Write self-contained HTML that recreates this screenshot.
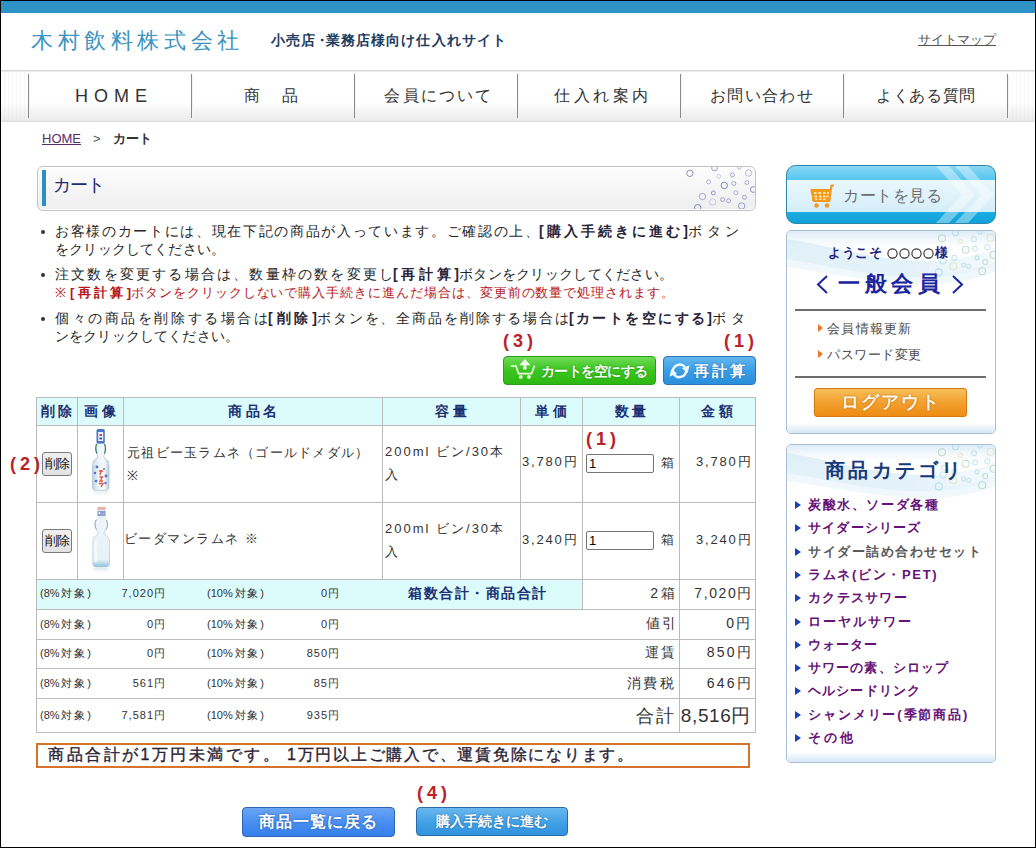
<!DOCTYPE html>
<html><head><meta charset="utf-8">
<style>
*{margin:0;padding:0;box-sizing:border-box;}
html,body{width:1036px;height:848px;overflow:hidden;background:#fff;}
body{font-family:"Liberation Sans",sans-serif;color:#333;position:relative;}
.abs{position:absolute;}
#frame{position:absolute;left:0;top:0;width:1036px;height:848px;border:1px solid #000;pointer-events:none;z-index:50;}
#topbar{left:1px;top:1px;width:1034px;height:12px;background:#2d93c4;}
#logo{left:31px;top:28px;font-size:22px;letter-spacing:4.6px;color:#3b93be;white-space:nowrap;line-height:26px;}
#sub{left:271px;top:31px;font-size:14px;font-weight:bold;color:#1d3d5e;letter-spacing:1.05px;white-space:nowrap;line-height:18px;}
#sitemap{left:918px;top:32px;font-size:13px;color:#555;text-decoration:underline;white-space:nowrap;line-height:16px;}
#nav{left:1px;top:70px;width:1034px;height:52px;border-top:1px solid #d9d9d9;border-bottom:1px solid #dedede;
 background:linear-gradient(#fff 0%,#fff 62%,#ebebeb 100%);box-shadow:inset 0 1px 0 #ececec,inset 0 -1px 0 #e8e8e8;}
.nv{position:absolute;top:0;height:50px;line-height:50px;text-align:center;font-size:16px;color:#333;white-space:nowrap;}
.dv{position:absolute;top:3px;width:1px;height:44px;background:#8a8a8a;box-shadow:1px 0 0 #f4f4f4;}
#crumb{left:42px;top:131px;font-size:13px;line-height:16px;white-space:nowrap;}
#crumb a{color:#5c2a66;text-decoration:underline;}
#h1box{left:37px;top:166px;width:719px;height:45px;border:1px solid #c2c2c2;border-radius:6px;box-shadow:inset 0 1px 0 #fff,inset 0 -1px 0 #fff;
 background:linear-gradient(#fdfdfd,#eeeeee);}
#h1bar{left:42px;top:170px;width:4px;height:36px;background:#2b8fbf;}
#h1t{left:53px;top:174px;font-size:18px;letter-spacing:-1px;color:#1c2a6e;line-height:22px;}
.bul{position:absolute;left:40px;font-size:13px;letter-spacing:0;line-height:18px;color:#262626;white-space:nowrap;}
.bul b{color:#2a2438;}
.j{display:inline-block;text-align:justify;text-align-last:justify;white-space:nowrap;vertical-align:top;}
.dot{position:absolute;width:4px;height:4px;border-radius:50%;background:#333;}
.red{color:#b8161c;}
.red b{color:#b8161c !important;}
.lbl{position:absolute;color:#bd2029;font-weight:bold;font-size:18px;line-height:20px;white-space:nowrap;letter-spacing:4px;}

.btn-g{border:1px solid #2f9a1e;border-radius:4px;background:linear-gradient(#6fdc55 0%,#3cc520 50%,#2cb812 100%);}
.btn-b{border:1px solid #2f73b4;border-radius:4px;background:linear-gradient(#63b8f0 0%,#3a9ee6 50%,#2a8fdc 100%);}

.tt{position:absolute;white-space:nowrap;font-size:13px;line-height:16px;color:#333;}
.th{position:absolute;text-align:center;font-size:14px;font-weight:bold;color:#1b3174;line-height:18px;white-space:nowrap;letter-spacing:3.5px;text-indent:3.5px;}

.j2{text-align:justify;text-align-last:justify;}
.sm{font-size:11px;letter-spacing:1px;}
.inp{border:1px solid #767676;border-radius:2px;background:#fff;font-size:13px;line-height:17px;color:#000;padding-left:2px;}

.num{font-size:13px;letter-spacing:1.8px;}
.cap{font-size:13px;letter-spacing:2px;}

.delb{border:1px solid #7a7a7a;border-radius:3px;background:linear-gradient(#f0f0f0,#e2e2e2);font-size:13px;line-height:22px;text-align:center;color:#111;letter-spacing:-0.5px;}
.bbtn1{border:1px solid #2d62b8;border-radius:4px;background:linear-gradient(#6aa6f4 0%,#4a8ef0 50%,#3480ec 100%);color:#fff;font-size:16px;font-weight:bold;text-align:center;line-height:28px;letter-spacing:1px;text-shadow:0 0 2px #1d4f9c;}
.bbtn2{border:1px solid #2a6aa6;border-radius:4px;background:linear-gradient(#6ab8ef 0%,#44a2e6 50%,#3093df 100%);color:#fff;font-size:14px;font-weight:bold;text-align:center;line-height:27px;letter-spacing:0;text-shadow:0 0 2px #1d5a8c;}

.sbox{border:1px solid #a9bdd6;border-radius:5px;background:#fff;overflow:hidden;}
.sband{position:absolute;left:0;bottom:0;width:100%;height:10px;background:linear-gradient(#ffffff,#d6e8f6);}
.wave{position:absolute;left:0;top:0;width:100%;height:70px;background:linear-gradient(170deg,#e6f1fb 0%,#f4f9fd 30%,#dfeef9 45%,#ffffff 70%);}
.tri{width:0;height:0;border-left:5px solid #e8782a;border-top:4px solid transparent;border-bottom:4px solid transparent;}
.btri{width:0;height:0;border-left:6px solid #1a3fb0;border-top:4px solid transparent;border-bottom:4px solid transparent;}
.logout{border:1px solid #d2780e;border-radius:3px;background:linear-gradient(#f8c05a 0%,#f2a030 50%,#ee8c14 100%);color:#fff8e6;font-size:18px;font-weight:bold;text-align:center;line-height:27px;letter-spacing:2px;text-shadow:0 0 2px #a85a00;}
</style></head><body>
<div id="frame"></div>
<div class="abs" id="topbar"></div>
<div class="abs" id="logo">木村飲料株式会社</div>
<div class="abs" id="sub">小売店<span style="letter-spacing:-3px;margin-left:-1px">・</span>業務店様向け仕入れサイト</div>
<div class="abs" id="sitemap">サイトマップ</div>

<div class="abs" id="nav">
 <div style="position:absolute;left:0;top:0;width:27px;height:50px;background:repeating-linear-gradient(90deg,rgba(0,0,0,0) 0px,rgba(0,0,0,0) 3px,rgba(0,0,0,0.025) 3px,rgba(0,0,0,0.025) 4px)"></div>
 <div style="position:absolute;left:1008px;top:0;width:26px;height:50px;background:repeating-linear-gradient(90deg,rgba(0,0,0,0) 0px,rgba(0,0,0,0) 3px,rgba(0,0,0,0.025) 3px,rgba(0,0,0,0.025) 4px)"></div>
 <div class="dv" style="left:27px"></div>
 <div class="nv" style="left:29px;width:162px;letter-spacing:6px;padding-left:6px;font-size:18px;">HOME</div>
 <div class="dv" style="left:190px"></div>
 <div class="nv" style="left:190px;width:162px;letter-spacing:3px">商　品</div>
 <div class="dv" style="left:353px"></div>
 <div class="nv" style="left:357px;width:162px;letter-spacing:2.2px">会員について</div>
 <div class="dv" style="left:516px"></div>
 <div class="nv" style="left:521px;width:162px;letter-spacing:3.5px">仕入れ案内</div>
 <div class="dv" style="left:679px"></div>
 <div class="nv" style="left:680px;width:162px;letter-spacing:1.4px">お問い合わせ</div>
 <div class="dv" style="left:842px"></div>
 <div class="nv" style="left:844px;width:162px;letter-spacing:0.6px">よくある質問</div>
 <div class="dv" style="left:1006px"></div>
</div>

<div class="abs" id="crumb"><a>HOME</a><span style="margin-left:12px;color:#555">&gt;</span><b style="margin-left:12px;color:#333">カート</b></div>

<div class="abs" id="h1box"></div>
<svg class="abs" style="left:660px;top:166px" width="96" height="44"><defs><clipPath id="hc"><rect x="0" y="1" width="95" height="42"/></clipPath></defs><g clip-path="url(#hc)" fill="none" stroke="#7474b8" stroke-width="1"><circle cx="29.9" cy="7.3" r="3.2" stroke-opacity="0.8"/><circle cx="54.5" cy="2.0" r="2.9" stroke-opacity="0.7"/><circle cx="79.4" cy="1.5" r="1.7" stroke-opacity="0.5"/><circle cx="88.6" cy="7.0" r="3.2" stroke-opacity="0.45"/><circle cx="58.7" cy="10.4" r="2" stroke-opacity="0.3"/><circle cx="72.4" cy="9.0" r="2" stroke-opacity="0.6"/><circle cx="48.7" cy="15.9" r="2" stroke-opacity="0.5"/><circle cx="64.3" cy="19.4" r="3.2" stroke-opacity="0.9"/><circle cx="73.8" cy="17.4" r="2" stroke-opacity="0.6"/><circle cx="86.9" cy="16.5" r="2" stroke-opacity="0.6"/><circle cx="93.3" cy="23.5" r="2.9" stroke-opacity="0.8"/><circle cx="42.5" cy="30.5" r="3.2" stroke-opacity="0.6"/><circle cx="53.3" cy="27.0" r="2" stroke-opacity="0.7"/><circle cx="75.9" cy="26.7" r="2" stroke-opacity="0.5"/><circle cx="84.4" cy="31.3" r="2" stroke-opacity="0.6"/><circle cx="52.7" cy="35.9" r="3.2" stroke-opacity="0.3"/><circle cx="62.6" cy="33.6" r="2" stroke-opacity="0.6"/><circle cx="68.6" cy="34.8" r="2" stroke-opacity="0.6"/><circle cx="37.7" cy="41.7" r="3.2" stroke-opacity="0.9"/><circle cx="81.7" cy="40.0" r="3.2" stroke-opacity="0.7"/></g></svg>
<div class="abs" id="h1bar"></div>
<div class="abs" id="h1t">カート</div>


<div class="dot" style="left:41px;top:230px"></div>
<div class="dot" style="left:41px;top:273px"></div>
<div class="dot" style="left:41px;top:317px"></div>
<div class="bul" style="left:55px;top:222px;font-size:14px"><span class="j" style="width:484px">お客様のカートには、現在下記の商品が入っています。ご確認の上、</span><b class="j" style="width:149px">[購入手続きに進む]</b><span class="j" style="width:51px">ボタン</span></div>
<div class="bul" style="left:55px;top:240px;font-size:14px"><span class="j" style="width:170px">をクリックしてください。</span></div>
<div class="bul" style="left:55px;top:265px;font-size:14px"><span class="j" style="width:338px">注文数を変更する場合は、数量枠の数を変更し</span><b class="j" style="width:66px">[再計算]</b><span class="j" style="width:214px">ボタンをクリックしてください。</span></div>
<div class="bul red" style="left:55px;top:284px;font-size:13px"><span class="j" style="width:15px">※</span><b class="j" style="width:61px">[再計算]</b><span class="j" style="width:543px">ボタンをクリックしないで購入手続きに進んだ場合は、変更前の数量で処理されます。</span></div>
<div class="bul" style="left:55px;top:309px;font-size:14px"><span class="j" style="width:213px">個々の商品を削除する場合は</span><b class="j" style="width:49px">[削除]</b><span class="j" style="width:252px">ボタンを、全商品を削除する場合は</span><b class="j" style="width:143px">[カートを空にする]</b><span class="j" style="width:33px">ボタ</span></div>
<div class="bul" style="left:55px;top:327px;font-size:14px"><span class="j" style="width:184px">ンをクリックしてください。</span></div>
<div class="lbl" style="left:503px;top:331px">(3)</div>
<div class="lbl" style="left:724px;top:331px">(1)</div>
<div class="abs btn-g" style="left:503px;top:356px;width:153px;height:29px">
<svg width="27" height="24" style="position:absolute;left:6px;top:0px" viewBox="0 0 27 24">
<path d="M1.4 9 L6 9 L8.6 16.7 L21.5 16.7 L24.3 9.2" fill="none" stroke="#eaffdc" stroke-width="1.7" stroke-linejoin="round" stroke-linecap="round"/>
<circle cx="10.8" cy="19.9" r="1.9" fill="#eaffdc"/><circle cx="18.9" cy="19.9" r="1.9" fill="#eaffdc"/>
<path d="M14.9 2 L20.5 8.3 L16.5 8.3 L16.5 12.5 L13.3 12.5 L13.3 8.3 L9.3 8.3 Z" fill="#f2fff0"/>
</svg>
<div style="position:absolute;left:37px;top:4px;font-size:14px;line-height:20px;font-weight:bold;color:#fbfff4;white-space:nowrap;text-shadow:0 0 2px #1d7a10;letter-spacing:-0.75px">カートを空にする</div>
</div>
<div class="abs btn-b" style="left:663px;top:356px;width:93px;height:29px">
<svg width="22" height="20" style="position:absolute;left:5px;top:4px" viewBox="0 0 22 20">
<path d="M3.9 10.8 A6.8 6.8 0 0 1 16 6.2" fill="none" stroke="#f2fbff" stroke-width="2.4"/>
<path d="M20.6 4.2 L18.6 11.9 L13 7.3 Z" fill="#f2fbff"/>
<path d="M17.1 9.2 A6.8 6.8 0 0 1 5 13.6" fill="none" stroke="#f2fbff" stroke-width="2.4"/>
<path d="M0.6 15.6 L2.4 7.9 L8.1 12.4 Z" fill="#f2fbff"/>
</svg>
<div style="position:absolute;left:30px;top:4px;font-size:15px;line-height:20px;font-weight:bold;color:#fff;white-space:nowrap;text-shadow:0 0 2px #1a5c9a;letter-spacing:3.2px">再計算</div>
</div>
<div class="abs" style="left:36px;top:397px;width:720px;height:29px;background:#dcfbfb"></div>
<div class="abs" style="left:36px;top:579px;width:547px;height:30px;background:#dcfbfb"></div>
<div class="abs" style="left:36px;top:397px;width:720px;height:1px;background:#bbbbbb"></div>
<div class="abs" style="left:36px;top:425px;width:720px;height:1px;background:#bbbbbb"></div>
<div class="abs" style="left:36px;top:502px;width:720px;height:1px;background:#bbbbbb"></div>
<div class="abs" style="left:36px;top:579px;width:720px;height:1px;background:#bbbbbb"></div>
<div class="abs" style="left:36px;top:609px;width:720px;height:1px;background:#bbbbbb"></div>
<div class="abs" style="left:36px;top:639px;width:720px;height:1px;background:#bbbbbb"></div>
<div class="abs" style="left:36px;top:668px;width:720px;height:1px;background:#bbbbbb"></div>
<div class="abs" style="left:36px;top:698px;width:720px;height:1px;background:#bbbbbb"></div>
<div class="abs" style="left:36px;top:732px;width:720px;height:1px;background:#bbbbbb"></div>
<div class="abs" style="left:36px;top:397px;width:1px;height:182px;background:#bbbbbb"></div>
<div class="abs" style="left:77px;top:397px;width:1px;height:182px;background:#bbbbbb"></div>
<div class="abs" style="left:123px;top:397px;width:1px;height:182px;background:#bbbbbb"></div>
<div class="abs" style="left:382px;top:397px;width:1px;height:182px;background:#bbbbbb"></div>
<div class="abs" style="left:520px;top:397px;width:1px;height:182px;background:#bbbbbb"></div>
<div class="abs" style="left:582px;top:397px;width:1px;height:182px;background:#bbbbbb"></div>
<div class="abs" style="left:679px;top:397px;width:1px;height:182px;background:#bbbbbb"></div>
<div class="abs" style="left:755px;top:397px;width:1px;height:182px;background:#bbbbbb"></div>
<div class="abs" style="left:36px;top:579px;width:1px;height:30px;background:#bbbbbb"></div>
<div class="abs" style="left:582px;top:579px;width:1px;height:30px;background:#bbbbbb"></div>
<div class="abs" style="left:679px;top:579px;width:1px;height:30px;background:#bbbbbb"></div>
<div class="abs" style="left:755px;top:579px;width:1px;height:30px;background:#bbbbbb"></div>
<div class="abs" style="left:36px;top:609px;width:1px;height:124px;background:#bbbbbb"></div>
<div class="abs" style="left:679px;top:609px;width:1px;height:124px;background:#bbbbbb"></div>
<div class="abs" style="left:755px;top:609px;width:1px;height:124px;background:#bbbbbb"></div>
<div class="th" style="left:36px;top:402px;width:41px">削除</div>
<div class="th" style="left:77px;top:402px;width:46px">画像</div>
<div class="th" style="left:123px;top:402px;width:259px">商品名</div>
<div class="th" style="left:382px;top:402px;width:138px">容量</div>
<div class="th" style="left:520px;top:402px;width:62px">単価</div>
<div class="th" style="left:582px;top:402px;width:97px">数量</div>
<div class="th" style="left:679px;top:402px;width:76px">金額</div>
<div class="tt j2" style="left:127px;top:445px;font-size:13px;width:241px;">元祖ビー玉ラムネ（ゴールドメダル）</div>
<div class="tt" style="left:127px;top:468px;font-size:13px;">※</div>
<div class="tt cap" style="left:385px;top:444px;">200ml ビン/30本</div>
<div class="tt" style="left:385px;top:467px;font-size:13px;">入</div>
<div class="tt num" style="left:522px;top:454px;">3,780円</div>
<div class="tt" style="left:661px;top:455px;font-size:13px;">箱</div>
<div class="tt num" style="left:696px;top:454px;">3,780円</div>
<div class="tt j2" style="left:124px;top:531px;font-size:13px;width:134px;">ビーダマンラムネ ※</div>
<div class="tt cap" style="left:385px;top:521px;">200ml ビン/30本</div>
<div class="tt" style="left:385px;top:544px;font-size:13px;">入</div>
<div class="tt num" style="left:522px;top:532px;">3,240円</div>
<div class="tt" style="left:661px;top:532px;font-size:13px;">箱</div>
<div class="tt num" style="left:696px;top:532px;">3,240円</div>
<div class="abs inp" style="left:586px;top:454px;width:68px;height:19px"><span>1</span></div>
<div class="abs inp" style="left:586px;top:531px;width:68px;height:19px"><span>1</span></div>
<div class="tt j2" style="left:40px;top:585px;font-size:11px;width:51px;font-family:"Liberation Mono",monospace;">(8%対象)</div>
<div class="tt sm" style="left:100px;top:585px;width:66px;text-align:right">7,020円</div>
<div class="tt j2" style="left:207px;top:585px;font-size:11px;width:57px;font-family:"Liberation Mono",monospace;">(10%対象)</div>
<div class="tt sm" style="left:270px;top:585px;width:70px;text-align:right">0円</div>
<div class="tt j2" style="left:40px;top:616px;font-size:11px;width:51px;font-family:"Liberation Mono",monospace;">(8%対象)</div>
<div class="tt sm" style="left:100px;top:616px;width:66px;text-align:right">0円</div>
<div class="tt j2" style="left:207px;top:616px;font-size:11px;width:57px;font-family:"Liberation Mono",monospace;">(10%対象)</div>
<div class="tt sm" style="left:270px;top:616px;width:70px;text-align:right">0円</div>
<div class="tt j2" style="left:40px;top:645px;font-size:11px;width:51px;font-family:"Liberation Mono",monospace;">(8%対象)</div>
<div class="tt sm" style="left:100px;top:645px;width:66px;text-align:right">0円</div>
<div class="tt j2" style="left:207px;top:645px;font-size:11px;width:57px;font-family:"Liberation Mono",monospace;">(10%対象)</div>
<div class="tt sm" style="left:270px;top:645px;width:70px;text-align:right">850円</div>
<div class="tt j2" style="left:40px;top:675px;font-size:11px;width:51px;font-family:"Liberation Mono",monospace;">(8%対象)</div>
<div class="tt sm" style="left:100px;top:675px;width:66px;text-align:right">561円</div>
<div class="tt j2" style="left:207px;top:675px;font-size:11px;width:57px;font-family:"Liberation Mono",monospace;">(10%対象)</div>
<div class="tt sm" style="left:270px;top:675px;width:70px;text-align:right">85円</div>
<div class="tt j2" style="left:40px;top:707px;font-size:11px;width:51px;font-family:"Liberation Mono",monospace;">(8%対象)</div>
<div class="tt sm" style="left:100px;top:707px;width:66px;text-align:right">7,581円</div>
<div class="tt j2" style="left:207px;top:707px;font-size:11px;width:57px;font-family:"Liberation Mono",monospace;">(10%対象)</div>
<div class="tt sm" style="left:270px;top:707px;width:70px;text-align:right">935円</div>
<div class="th" style="left:408px;top:584px;width:138px;text-align:left;letter-spacing:0;text-indent:0"><span class="j" style="width:138px">箱数合計・商品合計</span></div>
<div class="tt" style="left:560px;top:585px;font-size:14px;width:118px;letter-spacing:3px;text-align:right;">2箱</div>
<div class="tt" style="left:640px;top:585px;font-size:14px;width:113px;letter-spacing:1.6px;text-align:right;">7,020円</div>
<div class="tt" style="left:560px;top:615px;font-size:14px;width:118px;letter-spacing:2.2px;text-align:right;">値引</div>
<div class="tt" style="left:640px;top:615px;font-size:14px;width:113px;letter-spacing:2.5px;text-align:right;">0円</div>
<div class="tt" style="left:560px;top:644px;font-size:14px;width:117px;letter-spacing:2.2px;text-align:right;">運賃</div>
<div class="tt" style="left:640px;top:644px;font-size:14px;width:113px;letter-spacing:2.2px;text-align:right;">850円</div>
<div class="tt" style="left:560px;top:675px;font-size:14px;width:116px;letter-spacing:2.5px;text-align:right;">消費税</div>
<div class="tt" style="left:640px;top:675px;font-size:14px;width:113px;letter-spacing:2.2px;text-align:right;">646円</div>
<div class="tt" style="left:560px;top:705px;font-size:18px;width:116px;text-align:right;line-height:22px;letter-spacing:2px">合計</div>
<div class="tt" style="left:640px;top:705px;font-size:19px;width:111px;text-align:right;line-height:22px;letter-spacing:0.6px">8,516円</div>
<div class="abs delb" style="left:42px;top:452px;width:30px;height:24px">削除</div>
<div class="abs delb" style="left:42px;top:529px;width:30px;height:24px">削除</div>
<div class="lbl" style="left:10px;top:454px">(2)</div>
<div class="lbl" style="left:586px;top:429px">(1)</div>
<div class="lbl" style="left:417px;top:783px">(4)</div>
<div class="abs" style="left:36px;top:743px;width:714px;height:25px;border:2px solid #d6732a;"></div>
<div class="tt" style="left:48px;top:745px;font-size:16px;line-height:20px;color:#2a2233;-webkit-text-stroke:0.35px #2a2233;"><span class="j" style="width:231px">商品合計が1万円未満です。</span><span class="j" style="width:346px;margin-left:8px">1万円以上ご購入で、運賃免除になります。</span></div>
<div class="abs bbtn1" style="left:242px;top:807px;width:153px;height:30px">商品一覧に戻る</div>
<div class="abs bbtn2" style="left:416px;top:807px;width:152px;height:29px">購入手続きに進む</div>
<div class="abs" id="cartbtn" style="left:786px;top:165px;width:210px;height:59px">
<svg width="210" height="59" style="position:absolute;left:0;top:0">
<defs>
<linearGradient id="cgt" x1="0" y1="0" x2="0" y2="1"><stop offset="0" stop-color="#8ddaf6"/><stop offset="1" stop-color="#55c4ef"/></linearGradient>
<linearGradient id="cgm" x1="0" y1="0" x2="0" y2="1"><stop offset="0" stop-color="#e9f7fc"/><stop offset="1" stop-color="#d5eef9"/></linearGradient>
<linearGradient id="cgb" x1="0" y1="0" x2="0" y2="1"><stop offset="0" stop-color="#1aaee2"/><stop offset="1" stop-color="#0e9fd6"/></linearGradient>
<clipPath id="cclip"><rect x="0.5" y="0.5" width="209" height="58" rx="9" ry="9"/></clipPath>
</defs>
<g clip-path="url(#cclip)">
<rect x="0" y="0" width="210" height="15" fill="url(#cgt)"/>
<rect x="0" y="15" width="210" height="32" fill="url(#cgm)"/>
<rect x="0" y="47" width="210" height="12" fill="url(#cgb)"/>
<polygon points="149,0 162,0 189,30 162,59 149,59 176,30" fill="#ffffff" opacity="0.38"/>
<polygon points="168,0 181,0 208,30 181,59 168,59 195,30" fill="#ffffff" opacity="0.38"/>
</g>
<rect x="0.5" y="0.5" width="209" height="58" rx="9" ry="9" fill="none" stroke="#2f86a8" stroke-width="1"/>
</svg>
<svg width="26" height="26" style="position:absolute;left:24px;top:19px" viewBox="0 0 26 26">
<path d="M24 1.5 L21.5 1.5 L19 17 L4 17 L1.5 6 L20.5 6" fill="none" stroke="#f39a1e" stroke-width="2.2" stroke-linejoin="round"/>
<rect x="2" y="6" width="18.5" height="11" fill="#f39a1e"/>
<g fill="#ffe9a8"><rect x="4" y="8" width="2.5" height="2"/><rect x="8.5" y="8" width="2.5" height="2"/><rect x="13" y="8" width="2.5" height="2"/><rect x="17" y="8" width="2" height="2"/>
<rect x="4.5" y="11.5" width="2.5" height="2"/><rect x="9" y="11.5" width="2.5" height="2"/><rect x="13" y="11.5" width="2.5" height="2"/><rect x="16.5" y="11.5" width="2" height="2"/>
<rect x="5" y="14.5" width="2.5" height="1.5"/><rect x="9" y="14.5" width="2.5" height="1.5"/><rect x="13" y="14.5" width="2.5" height="1.5"/></g>
<circle cx="6.5" cy="21.5" r="2.3" fill="#f39a1e"/><circle cx="17" cy="21.5" r="2.3" fill="#f39a1e"/>
</svg>
<div style="position:absolute;left:57px;top:20px;font-size:16px;line-height:22px;color:#6d6d6d;letter-spacing:0.6px;white-space:nowrap">カートを見る</div>
</div>
<div class="abs sbox" style="left:786px;top:230px;width:210px;height:204px">
<svg width="210" height="80" style="position:absolute;left:0;top:0"><defs><linearGradient id="wv230" x1="0" y1="0" x2="1" y2="0"><stop offset="0" stop-color="#cfe6f4" stop-opacity="0.6"/><stop offset="0.6" stop-color="#d8ecf7" stop-opacity="0.7"/><stop offset="1" stop-color="#e6f3fa" stop-opacity="0.4"/></linearGradient><linearGradient id="tp230" x1="0" y1="0" x2="0" y2="1"><stop offset="0" stop-color="#dcebf7"/><stop offset="1" stop-color="#ffffff" stop-opacity="0"/></linearGradient></defs><rect x="0" y="0" width="210" height="22" fill="url(#tp230)"/><path d="M0,8 C40,14 90,30 140,30 C175,30 195,22 210,16 L210,34 C190,42 160,48 120,46 C80,44 35,34 0,28 Z" fill="url(#wv230)"/><path d="M0,22 C50,30 100,44 150,42 C180,41 200,34 210,30 L210,40 C190,50 150,56 110,52 C70,48 30,40 0,36 Z" fill="#e4f1f9" opacity="0.5"/><g fill="none" stroke-width="1.1" opacity="0.5"><circle cx="154.9" cy="7.3" r="3.5" stroke="#8fc49a"/><circle cx="168.4" cy="1.7" r="3" stroke="#8ccde0"/><circle cx="187.0" cy="8.3" r="2.5" stroke="#9ccfe0"/><circle cx="193.0" cy="1.0" r="2" stroke="#9ccfe0"/><circle cx="203.5" cy="6.7" r="3.5" stroke="#c8d890"/><circle cx="173.5" cy="10.4" r="2" stroke="#e0e0a8"/><circle cx="178.7" cy="18.7" r="3.5" stroke="#8fc49a"/><circle cx="188.0" cy="17.6" r="2.5" stroke="#9ccfe0"/><circle cx="200.4" cy="16.2" r="2.5" stroke="#9ccfe0"/><circle cx="206.6" cy="23.8" r="3.5" stroke="#8fc49a"/><circle cx="157.0" cy="22.8" r="2.5" stroke="#9ccfe0"/><circle cx="167.3" cy="26.9" r="2.5" stroke="#9ccfe0"/><circle cx="156.0" cy="30.0" r="3" stroke="#9ccfe0"/><circle cx="176.6" cy="34.1" r="2" stroke="#9ccfe0"/><circle cx="181.8" cy="35.2" r="2" stroke="#9ccfe0"/><circle cx="190.0" cy="26.9" r="2" stroke="#8ccde0"/><circle cx="198.3" cy="31.0" r="2.5" stroke="#8fc49a"/><circle cx="166.3" cy="35.2" r="3.5" stroke="#d8d890"/><circle cx="195.2" cy="40.3" r="3.5" stroke="#8fc49a"/><circle cx="151.8" cy="41.4" r="3.5" stroke="#8ccde0"/></g></svg>
<div class="sband"></div>
</div>
<div class="tt" style="left:828px;top:245px;font-size:13px;font-weight:bold;color:#1a237e;line-height:16px;letter-spacing:0.5px">ようこそ</div>
<svg class="abs" style="left:886px;top:247px" width="50" height="13"><g fill="none" stroke="#2a2a2a" stroke-width="1.1"><circle cx="6.5" cy="6.5" r="4.6"/><circle cx="18.5" cy="6.5" r="4.6"/><circle cx="30.5" cy="6.5" r="4.6"/><circle cx="42.5" cy="6.5" r="4.6"/></g></svg>
<div class="tt" style="left:935px;top:245px;font-size:13px;font-weight:bold;color:#1a237e;line-height:16px">様</div>
<svg class="abs" style="left:815px;top:274px" width="150" height="22"><g fill="none" stroke="#1a24a0" stroke-width="2"><polyline points="12,2 3,10.5 12,19"/><polyline points="138,2 147,10.5 138,19"/></g></svg>
<div class="tt" style="left:838px;top:271px;font-size:22px;font-weight:bold;color:#1a24a0;line-height:26px;letter-spacing:4.5px">一般会員</div>
<div class="abs" style="left:795px;top:309px;width:191px;height:2px;background:#6e6e6e"></div>
<div class="abs tri" style="left:818px;top:324px"></div>
<div class="tt" style="left:827px;top:321px;font-size:13px;color:#4a4a4a;line-height:16px;letter-spacing:1.3px">会員情報更新</div>
<div class="abs tri" style="left:818px;top:350px"></div>
<div class="tt" style="left:827px;top:347px;font-size:13px;color:#4a4a4a;line-height:16px;letter-spacing:0.5px">パスワード変更</div>
<div class="abs" style="left:795px;top:376px;width:191px;height:2px;background:#6e6e6e"></div>
<div class="abs logout" style="left:814px;top:388px;width:153px;height:29px">ログアウト</div>

<div class="abs sbox" style="left:786px;top:444px;width:210px;height:319px">
<svg width="210" height="80" style="position:absolute;left:0;top:0"><defs><linearGradient id="wv444" x1="0" y1="0" x2="1" y2="0"><stop offset="0" stop-color="#cfe6f4" stop-opacity="0.6"/><stop offset="0.6" stop-color="#d8ecf7" stop-opacity="0.7"/><stop offset="1" stop-color="#e6f3fa" stop-opacity="0.4"/></linearGradient><linearGradient id="tp444" x1="0" y1="0" x2="0" y2="1"><stop offset="0" stop-color="#dcebf7"/><stop offset="1" stop-color="#ffffff" stop-opacity="0"/></linearGradient></defs><rect x="0" y="0" width="210" height="22" fill="url(#tp444)"/><path d="M0,8 C40,14 90,30 140,30 C175,30 195,22 210,16 L210,34 C190,42 160,48 120,46 C80,44 35,34 0,28 Z" fill="url(#wv444)"/><path d="M0,22 C50,30 100,44 150,42 C180,41 200,34 210,30 L210,40 C190,50 150,56 110,52 C70,48 30,40 0,36 Z" fill="#e4f1f9" opacity="0.5"/><g fill="none" stroke-width="1.1" opacity="0.5"><circle cx="154.9" cy="7.3" r="3.5" stroke="#8fc49a"/><circle cx="168.4" cy="1.7" r="3" stroke="#8ccde0"/><circle cx="187.0" cy="8.3" r="2.5" stroke="#9ccfe0"/><circle cx="193.0" cy="1.0" r="2" stroke="#9ccfe0"/><circle cx="203.5" cy="6.7" r="3.5" stroke="#c8d890"/><circle cx="173.5" cy="10.4" r="2" stroke="#e0e0a8"/><circle cx="178.7" cy="18.7" r="3.5" stroke="#8fc49a"/><circle cx="188.0" cy="17.6" r="2.5" stroke="#9ccfe0"/><circle cx="200.4" cy="16.2" r="2.5" stroke="#9ccfe0"/><circle cx="206.6" cy="23.8" r="3.5" stroke="#8fc49a"/><circle cx="157.0" cy="22.8" r="2.5" stroke="#9ccfe0"/><circle cx="167.3" cy="26.9" r="2.5" stroke="#9ccfe0"/><circle cx="156.0" cy="30.0" r="3" stroke="#9ccfe0"/><circle cx="176.6" cy="34.1" r="2" stroke="#9ccfe0"/><circle cx="181.8" cy="35.2" r="2" stroke="#9ccfe0"/><circle cx="190.0" cy="26.9" r="2" stroke="#8ccde0"/><circle cx="198.3" cy="31.0" r="2.5" stroke="#8fc49a"/><circle cx="166.3" cy="35.2" r="3.5" stroke="#d8d890"/><circle cx="195.2" cy="40.3" r="3.5" stroke="#8fc49a"/><circle cx="151.8" cy="41.4" r="3.5" stroke="#8ccde0"/></g></svg>
<div class="sband"></div>
</div>
<div class="tt" style="left:825px;top:458px;font-size:20px;font-weight:bold;color:#173a7a;line-height:24px;letter-spacing:3.3px;font-family:'Liberation Serif',serif">商品カテゴリ</div>
<div class="abs btri" style="left:795px;top:501px"></div>
<div class="tt" style="left:808px;top:497px;font-size:13px;font-weight:bold;color:#661177;line-height:16px;letter-spacing:1.62px">炭酸水、ソーダ各種</div>
<div class="abs btri" style="left:795px;top:524px"></div>
<div class="tt" style="left:808px;top:520px;font-size:13px;font-weight:bold;color:#661177;line-height:16px;letter-spacing:1.17px">サイダーシリーズ</div>
<div class="abs btri" style="left:795px;top:548px"></div>
<div class="tt" style="left:808px;top:544px;font-size:13px;font-weight:bold;color:#5a5a5a;line-height:16px;letter-spacing:1.55px">サイダー詰め合わせセット</div>
<div class="abs btri" style="left:795px;top:571px"></div>
<div class="tt" style="left:808px;top:567px;font-size:13px;font-weight:bold;color:#661177;line-height:16px;letter-spacing:1.67px">ラムネ(ビン・PET)</div>
<div class="abs btri" style="left:795px;top:594px"></div>
<div class="tt" style="left:808px;top:590px;font-size:13px;font-weight:bold;color:#661177;line-height:16px;letter-spacing:1.30px">カクテスサワー</div>
<div class="abs btri" style="left:795px;top:618px"></div>
<div class="tt" style="left:808px;top:614px;font-size:13px;font-weight:bold;color:#661177;line-height:16px;letter-spacing:2.00px">ローヤルサワー</div>
<div class="abs btri" style="left:795px;top:641px"></div>
<div class="tt" style="left:808px;top:637px;font-size:13px;font-weight:bold;color:#661177;line-height:16px;letter-spacing:0.95px">ウォーター</div>
<div class="abs btri" style="left:795px;top:664px"></div>
<div class="tt" style="left:808px;top:660px;font-size:13px;font-weight:bold;color:#661177;line-height:16px;letter-spacing:1.11px">サワーの素、シロップ</div>
<div class="abs btri" style="left:795px;top:687px"></div>
<div class="tt" style="left:808px;top:683px;font-size:13px;font-weight:bold;color:#661177;line-height:16px;letter-spacing:1.14px">ヘルシードリンク</div>
<div class="abs btri" style="left:795px;top:711px"></div>
<div class="tt" style="left:808px;top:707px;font-size:13px;font-weight:bold;color:#661177;line-height:16px;letter-spacing:1.89px">シャンメリー(季節商品)</div>
<div class="abs btri" style="left:795px;top:734px"></div>
<div class="tt" style="left:808px;top:730px;font-size:13px;font-weight:bold;color:#661177;line-height:16px;letter-spacing:2.75px">その他</div>
<svg class="abs" style="left:78px;top:426px" width="45" height="76" viewBox="1 1 45 76">
<defs>
<linearGradient id="gl1" x1="0" y1="0" x2="1" y2="0"><stop offset="0" stop-color="#b9d2e0"/><stop offset="0.35" stop-color="#eef5fa"/><stop offset="0.7" stop-color="#f6fafc"/><stop offset="1" stop-color="#b4ccdc"/></linearGradient>
<linearGradient id="gr1" x1="0" y1="0" x2="0" y2="1"><stop offset="0" stop-color="#d8e8f0" stop-opacity="0.7"/><stop offset="1" stop-color="#ffffff" stop-opacity="0"/></linearGradient>
</defs>
<path d="M20.5,18 L27,18 C29,20 29.5,25 28.2,28 C27.2,30 26.5,31 27.2,33 C30.5,34.5 32,36.5 32,40 L32,62 C32,64.5 30.5,65.5 28,65.5 L19.5,65.5 C17,65.5 15.5,64.5 15.5,62 L15.5,40 C15.5,36.5 17,34.5 20.3,33 C21,31 20.3,30 19.3,28 C18,25 18.5,20 20.5,18 Z" fill="url(#gl1)" stroke="#9fb8c8" stroke-width="0.6"/>
<path d="M19.5,19 C18.5,22 18.8,26 20,28.5 M27.5,19 C28.7,22 28.5,26 27.3,28.5" fill="none" stroke="#3e7c6a" stroke-width="1.2"/>
<rect x="19.5" y="4" width="8.3" height="14.5" rx="1.5" fill="#4a78c8"/>
<rect x="21.2" y="7" width="5" height="9" fill="#f4f6ff"/>
<rect x="22.5" y="9" width="2.5" height="2" fill="#d04040"/><rect x="22.5" y="12.5" width="2.5" height="2" fill="#3050b0"/>
<g fill="#3c5cc0" opacity="0.85"><circle cx="20" cy="42" r="1.4"/><circle cx="18" cy="48" r="1.2"/><circle cx="29" cy="51" r="1.4"/><circle cx="19" cy="56" r="1.3"/><circle cx="28.5" cy="58" r="1.2"/><circle cx="27" cy="44" r="1"/></g>
<g stroke="#e0524a" stroke-width="1.3" fill="none"><path d="M22,46 L26,46 M24,45 L23,50"/><path d="M22.5,52 L25.5,52 L23,56 L26,56"/><path d="M22,58.5 L26,58.5 L24,62"/></g>
<rect x="15.5" y="38" width="16.5" height="1.5" fill="#e8eef8" opacity="0.6"/>
<path d="M16,66.5 L31.5,66.5 L30,73 L17.5,73 Z" fill="url(#gr1)"/>
</svg>
<svg class="abs" style="left:78px;top:503px" width="45" height="76" viewBox="1 1 45 76">
<defs>
<linearGradient id="gl2" x1="0" y1="0" x2="1" y2="0"><stop offset="0" stop-color="#c6dae6"/><stop offset="0.4" stop-color="#f3f8fb"/><stop offset="0.75" stop-color="#f8fbfd"/><stop offset="1" stop-color="#bcd2e0"/></linearGradient>
<linearGradient id="gb2" x1="0" y1="0" x2="0" y2="1"><stop offset="0" stop-color="#f0f6fa"/><stop offset="0.85" stop-color="#e6f0f6"/><stop offset="1" stop-color="#8cc4dc"/></linearGradient>
<linearGradient id="gr2" x1="0" y1="0" x2="0" y2="1"><stop offset="0" stop-color="#cfe4ee" stop-opacity="0.8"/><stop offset="1" stop-color="#ffffff" stop-opacity="0"/></linearGradient>
</defs>
<path d="M20.5,16.5 L28,16.5 C30.5,19 31,24 29.3,27 C28,29 26.8,30 27,32 C30.5,34 32.5,36 32.5,40 L32.5,61.5 C32.5,64 31,65 28.5,65 L19.5,65 C17,65 15.8,64 15.8,61.5 L15.8,40 C15.8,36 17.8,34 21.2,32 C21.4,30 20.3,29 19,27 C17.3,24 18,19 20.5,16.5 Z" fill="url(#gb2)" stroke="#a9c2d2" stroke-width="0.6"/>
<path d="M19,18 C17.6,21 17.8,25 19.5,27.5 M29.6,18 C31,21 30.8,25 29.2,27.5" fill="none" stroke="#8fb0c4" stroke-width="1"/>
<rect x="20" y="4.5" width="9" height="12.5" rx="1.2" fill="#e8eef6"/>
<rect x="20.5" y="5" width="8" height="3" fill="#e8b0b0"/>
<rect x="20.5" y="9" width="8" height="5" fill="#6c8cd0" opacity="0.8"/>
<circle cx="22.5" cy="11" r="1" fill="#fff"/><circle cx="26.5" cy="12" r="1" fill="#f0a0a0"/>
<rect x="17" y="40" width="3" height="20" fill="#ffffff" opacity="0.5"/>
<path d="M16.5,66 L31.5,66 L30,72 L18,72 Z" fill="url(#gr2)"/>
</svg>
</body></html>
